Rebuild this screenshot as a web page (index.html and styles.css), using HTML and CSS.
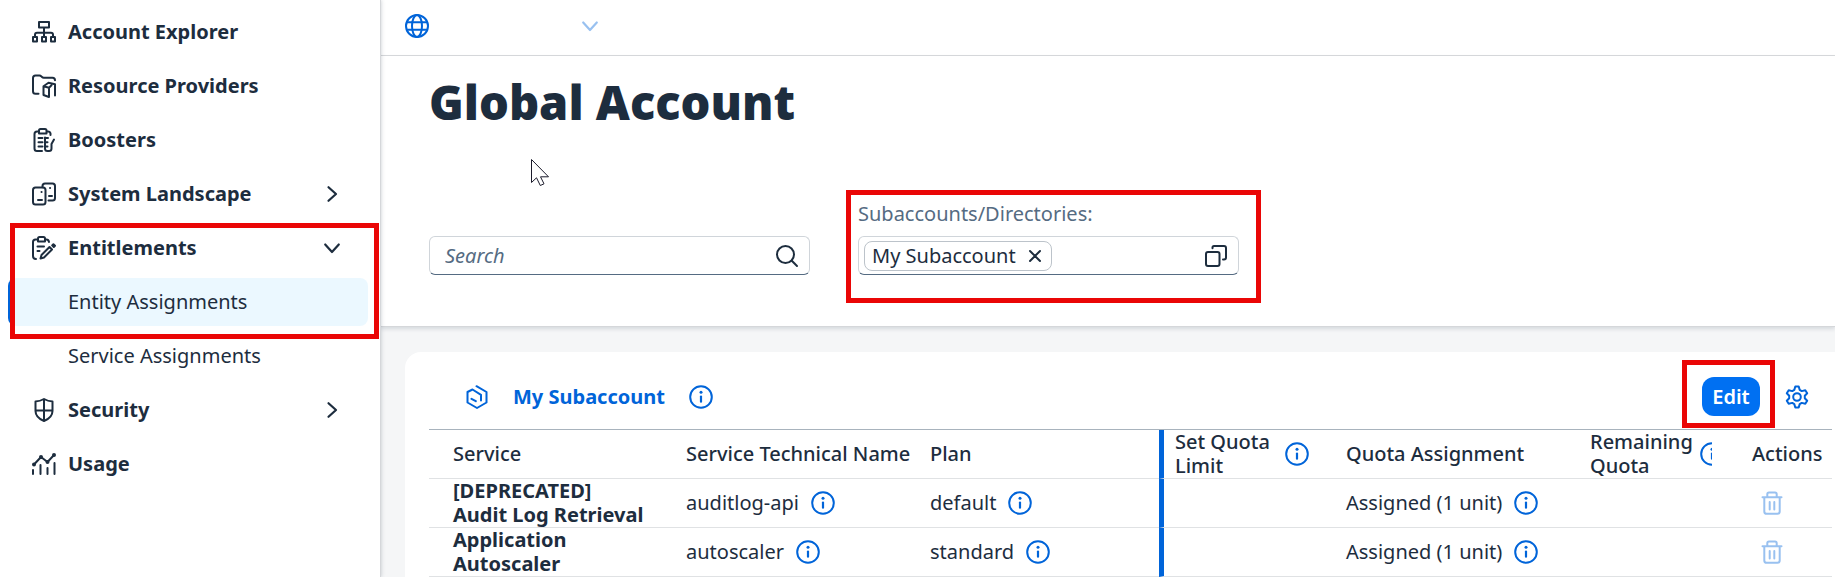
FILE: index.html
```html
<!DOCTYPE html>
<html lang="en">
<head>
<meta charset="utf-8">
<title>Global Account</title>
<link rel="stylesheet" href="styles.css">
</head>
<body>
<svg class="defs" aria-hidden="true">
  <symbol id="info" viewBox="0 0 24 24"><circle cx="12" cy="12" r="10.800" fill="none" stroke="currentColor" stroke-width="2"/><path d="M12 11.500v5.200" fill="none" stroke="currentColor" stroke-width="2.200" stroke-linecap="round"/><circle cx="12" cy="7.200" r="1.500" fill="currentColor" stroke="none"/></symbol>
  <symbol id="trash" viewBox="0 0 24 24"><path d="M2.500 6.200h19M4.300 6.200V20.400q0 2.400 2.400 2.400h10.600q2.400 0 2.400-2.400V6.200M7.300 6V3.200q0-1.700 1.700-1.700h6q1.700 0 1.700 1.700V6M9.700 11v7.500M14.300 11v7.500" fill="none" stroke="currentColor" stroke-width="2" stroke-linecap="round"/></symbol>
  <symbol id="right" viewBox="0 0 24 24"><path d="M8.500 5.200l7.500 6.800-7.500 6.800" fill="none" stroke="currentColor" stroke-width="2.200" stroke-linecap="round" stroke-linejoin="round"/></symbol>
  <symbol id="down" viewBox="0 0 24 24"><path d="M5.200 8.500l6.800 7.500 6.800-7.500" fill="none" stroke="currentColor" stroke-width="2.200" stroke-linecap="round" stroke-linejoin="round"/></symbol>
</svg>
<div class="app">
  <nav class="sidebar">
    <a class="item" href="#"><svg class="icon" viewBox="0 0 24 24"><path d="M7 2h10v5.500H7zM12 7.500v9M3 16.500v-1.800q0-2 2-2h14q2 0 2 2v1.800M1 17h4v4.500H1zM10 17h4v4.500h-4zM19 17h4v4.500h-4z"/></svg>Account Explorer</a>
    <a class="item" href="#"><svg class="icon" viewBox="0 0 24 24"><path d="M6.500 19.800H3.500q-2.500 0-2.500-2.500V4q0-2.500 2.500-2.500h4q1 0 1.700.8l.8.700q.7.700 1.700.7h8.800q2.500 0 2.500 2.500M11.500 12.200l5.500 1.600v9.200l-5.500-2V12.200l5-3.500 6.500 1.500V21.500M17 13.800l2.500-2.500"/></svg>Resource Providers</a>
    <a class="item" href="#"><svg class="icon" viewBox="0 0 24 24"><path d="M10 23H5q-2.500 0-2.500-2.500V6Q2.500 3.500 5 3.500h2M14.500 3.500h1.500q2 0 2.500 2v1.500M7 2.500q0-1.500 1.500-1.500h4.500q1.500 0 1.500 1.500v3H7zM6.500 10h4M6.500 14.200h4M6.500 18.400h4M13 9.500v11q0 2.500 2.500 2.500h1.500q2.500 0 2.500-2.500v-4.500l2.500-4.500M13 10h3M13 14.200h2.500M13 18.400h2.500"/></svg>Boosters</a>
    <a class="item" href="#"><svg class="icon" viewBox="0 0 24 24"><rect x="1" y="5.500" width="12.500" height="17" rx="2.500"/><path d="M10.500 5.300V4Q10.500 1.500 13 1.500h7.500Q23 1.500 23 4v12q0 2.500-2.500 2.500h-4M6 18h4M17 14h3M9.500 10h.1M18 6h.1"/></svg>System Landscape<svg class="icon arrow"><use href="#right"/></svg></a>
    <div class="group">
      <a class="item" href="#"><svg class="icon" viewBox="0 0 24 24"><path d="M4 23q-3 0-3-3V6q0-2.500 2.500-2.500H6M13 3.500h1.500q2 0 2.500 2.500M6 2.500Q6 1 7.500 1h4Q13 1 13 2.500v3H6zM5.500 10.500h6.500M5.500 15h2M9.500 19l8-8 2.500 2.500-8 8-3.500 1zM21.400 8.200l1.600 1.600-1.200 1.200-1.600-1.600z"/></svg>Entitlements<svg class="icon arrow"><use href="#down"/></svg></a>
      <a class="item sub selected" href="#" aria-current="page">Entity Assignments</a>
      <span class="mark mark-nav"></span>
    </div>
    <a class="item sub" href="#">Service Assignments</a>
    <a class="item" href="#"><svg class="icon" viewBox="0 0 24 24"><path d="M12 1q4 2.300 8.500 2.500v9.500q0 6.500-8.500 10-8.500-3.500-8.500-10V3.500Q8 3.300 12 1zM12 1v22M3.500 12.500h17"/></svg>Security<svg class="icon arrow"><use href="#right"/></svg></a>
    <a class="item" href="#"><svg class="icon" viewBox="0 0 24 24"><path d="M2 12.500l7-7.500 6.500 5L22 3M1 18v4M8.500 13v9M15.500 16v6M22.500 11v11"/><g class="dots"><circle cx="2" cy="12.500" r="1"/><circle cx="9" cy="5" r="1"/><circle cx="15.500" cy="10" r="1"/><circle cx="22" cy="3" r="1"/></g></svg>Usage</a>
  </nav>
  <main class="main">
    <header class="crumbs">
      <svg class="icon" viewBox="0 0 24 24"><circle cx="12" cy="12" r="11"/><ellipse cx="12" cy="12" rx="5" ry="11"/><path d="M1.800 8.200h20.400M1.800 15.800h20.400"/></svg>
      <button class="switch" type="button" aria-label="Switch account"><svg class="icon"><use href="#down"/></svg></button>
    </header>
    <section class="head">
      <h1>Global Account</h1>
      <div class="filters">
        <div class="field">
          <input type="search" placeholder="Search" aria-label="Search">
          <svg class="icon" viewBox="0 0 24 24"><circle cx="10.500" cy="10.500" r="8.500"/><path d="M16.800 16.800l5.200 5.200"/></svg>
        </div>
        <div class="labelled">
          <label for="subs">Subaccounts/Directories:</label>
          <div class="field">
            <span class="chip">My Subaccount<button type="button" aria-label="Remove"><svg class="icon" viewBox="0 0 24 24"><path d="M7 7l10 10M17 7L7 17"/></svg></button></span>
            <input id="subs" type="text">
            <svg class="icon" viewBox="0 0 24 24"><rect x="2" y="8" width="13.500" height="14" rx="2"/><path d="M8.500 4.200V3.500Q8.500 2 10 2h10q2 0 2 2v9.500q0 2-2 2h-1"/></svg>
          </div>
          <span class="mark mark-subs"></span>
        </div>
      </div>
      <svg class="pointer" viewBox="0 0 18 27"><path d="M.5.500v23l5-4.700 3.800 7.700 3.700-1.700-3.500-7h8z" fill="#fff" stroke="#1b1b2b"/></svg>
    </section>
    <section class="card">
      <div class="toolbar">
        <svg class="icon" viewBox="0 0 24 24"><path d="M11.500 1.200L21.500 7v10.500L12 23l-9.500-5.500V7L7.500 4.500l8.500 5.300v5.700M6.500 13.800l4.300 2.400"/></svg>
        <h2>My Subaccount</h2>
        <svg class="icon"><use href="#info"/></svg>
        <div class="edit"><button type="button">Edit</button><span class="mark mark-edit"></span></div>
        <button class="gear" type="button" aria-label="Settings"><svg class="icon" viewBox="0 0 24 24"><circle cx="12" cy="12" r="3.800"/><path d="M10.300 1.500h3.400l1 3.400 2 1.200 3.600-.9 1.900 3-2.400 2.600v2.400l2.400 2.600-1.900 3-3.600-.9-2 1.200-1 3.400h-3.400l-1-3.400-2-1.200-3.600.9-1.900-3 2.400-2.600v-2.400L1.800 8.200l1.900-3 3.600.9 2-1.200z"/></svg></button>
      </div>
      <table>
        <colgroup><col class="c1"><col class="c2"><col class="c3"><col class="c4"><col class="c5"><col class="c6"><col class="c7"></colgroup>
        <thead>
          <tr>
            <th>Service</th><th>Service Technical Name</th><th>Plan</th>
            <th class="quota"><div class="cell"><span class="wrap">Set Quota Limit</span><svg class="icon"><use href="#info"/></svg></div></th>
            <th>Quota Assignment</th>
            <th><div class="cell clip"><span class="wrap">Remaining Quota</span><svg class="icon"><use href="#info"/></svg></div></th>
            <th>Actions</th>
          </tr>
        </thead>
        <tbody>
          <tr>
            <td class="name">[DEPRECATED] Audit Log Retrieval</td>
            <td><div class="cell">auditlog-api<svg class="icon"><use href="#info"/></svg></div></td>
            <td><div class="cell">default<svg class="icon"><use href="#info"/></svg></div></td>
            <td class="quota"></td>
            <td><div class="cell">Assigned (1 unit)<svg class="icon"><use href="#info"/></svg></div></td>
            <td></td>
            <td><button class="delete" type="button" aria-label="Delete" disabled><svg class="icon"><use href="#trash"/></svg></button></td>
          </tr>
          <tr>
            <td class="name">Application Autoscaler</td>
            <td><div class="cell">autoscaler<svg class="icon"><use href="#info"/></svg></div></td>
            <td><div class="cell">standard<svg class="icon"><use href="#info"/></svg></div></td>
            <td class="quota"></td>
            <td><div class="cell">Assigned (1 unit)<svg class="icon"><use href="#info"/></svg></div></td>
            <td></td>
            <td><button class="delete" type="button" aria-label="Delete" disabled><svg class="icon"><use href="#trash"/></svg></button></td>
          </tr>
        </tbody>
      </table>
    </section>
  </main>
</div>
</body>
</html>
```
FILE: styles.css
```css
* { box-sizing: border-box; }
body {
  margin: 0;
  background: #f5f6f7;
  color: #1d2d3e;
  font: 20px/24px "Noto Sans", sans-serif;
}
button, input { font: inherit; color: inherit; }
button { border: 0; padding: 0; background: none; }
.defs { position: absolute; width: 0; height: 0; }
.icon {
  flex: none;
  display: block;
  width: 24px;
  height: 24px;
  fill: none;
  stroke: currentColor;
  stroke-width: 2;
  stroke-linecap: round;
  stroke-linejoin: round;
}
.dots { fill: currentColor; }
.app { display: flex; min-height: 100vh; }

.sidebar {
  position: relative;
  z-index: 1;
  flex: none;
  display: flex;
  flex-direction: column;
  gap: 6px;
  width: 381px;
  padding: 8px 12px 8px 8px;
  background: #fff;
  border-right: 1px solid #d5d7da;
  box-shadow: 0 0 4px rgba(34, 53, 72, .25);
}
.group { position: relative; display: flex; flex-direction: column; gap: 6px; }
.item {
  display: flex;
  align-items: center;
  gap: 12px;
  height: 48px;
  padding: 0 24px;
  border-radius: 8px;
  color: #1d2d3e;
  font-weight: 700;
  text-decoration: none;
}
.arrow { margin-left: auto; }
.sub { padding-left: 60px; font-weight: 400; }
.selected { background: linear-gradient(90deg, #0064d9 3px, #ebf8ff 3px); }

.mark { position: absolute; border: 5px solid #ea0606; pointer-events: none; }
.mark-nav { inset: -1px -11px -13px 2px; }
.mark-subs { inset: -12px -22px -28px -12px; }
.mark-edit { inset: -17px -15px -12px -20px; }

.main { flex: 1; min-width: 0; display: flex; flex-direction: column; }
.crumbs {
  display: flex;
  align-items: center;
  gap: 149px;
  height: 56px;
  padding: 0 24px 4px;
  background: #fff;
  border-bottom: 1px solid #d9dbdd;
  color: #0064d9;
}
.switch { color: #99c1f0; }
.head {
  position: relative;
  padding: 18px 48px 51px;
  background: #fff;
  border-bottom: 1px solid #d5d7da;
  box-shadow: 0 2px 4px rgba(34, 53, 72, .15);
}
h1 { margin: 0 0 72px; font-size: 47px; line-height: 56px; font-weight: 900; }
.pointer { position: absolute; left: 150px; top: 103px; width: 18px; height: 27px; }
.filters { display: flex; align-items: flex-end; gap: 48px; }
.labelled { position: relative; display: flex; flex-direction: column; gap: 10px; }
.labelled label { color: #556b82; }
.field {
  display: flex;
  align-items: center;
  width: 381px;
  height: 39px;
  padding: 0 10px 0 15px;
  background: #fff;
  border: 1px solid #d0d5da;
  border-bottom-color: #556b82;
  border-radius: 6px;
}
.labelled .field { padding-left: 5px; }
.field input { flex: 1; min-width: 0; padding: 0; border: 0; outline: 0; background: none; appearance: none; }
.field input::placeholder { color: #556b82; font-style: italic; opacity: 1; }
.chip {
  display: flex;
  align-items: center;
  gap: 7px;
  height: 30px;
  padding: 0 4px 0 7px;
  border: 1px solid #bcc3ca;
  border-radius: 8px;
  white-space: nowrap;
}

.card {
  flex: 1;
  margin: 25px 0 0 24px;
  padding: 0 3px 0 24px;
  background: #fff;
  border-top-left-radius: 16px;
}
.toolbar { display: flex; align-items: center; height: 77px; padding: 12px 23px 0 36px; color: #0064d9; }
.toolbar h2 { margin: 0 24px; font-size: 20px; line-height: 24px; font-weight: 700; }
.edit { position: relative; margin-left: auto; }
.edit button {
  display: block;
  width: 58px;
  height: 39px;
  border-radius: 12px;
  background: #0070f2;
  color: #fff;
  font-weight: 600;
}
.gear { margin-left: 25px; }

table { width: 100%; table-layout: fixed; border-collapse: separate; border-spacing: 0; border-top: 1px solid #a8b3bd; }
.c1 { width: 249px; }
.c2 { width: 244px; }
.c3 { width: 237px; }
.c4 { width: 179px; }
.c5 { width: 244px; }
.c6 { width: 138px; }
.c7 { width: 112px; }
th, td { height: 49px; padding: 0 8px; border-bottom: 1px solid #e0e2e4; text-align: left; vertical-align: middle; }
th { font-weight: 500; }
th:first-child, td:first-child { padding-left: 24px; }
th:last-child { padding: 0 0 0 32px; }
td:last-child { padding: 0 0 0 40px; }
td.name { font-weight: 700; padding-right: 30px; }
th.quota, td.quota { border-left: 5px solid #0064d9; padding-left: 11px; }
.cell { display: flex; align-items: center; gap: 12px; }
.clip { overflow: hidden; }
.cell .icon { color: #0064d9; }
.wrap { flex: none; width: 98px; }
.delete { display: block; color: #99c1f0; }
```
